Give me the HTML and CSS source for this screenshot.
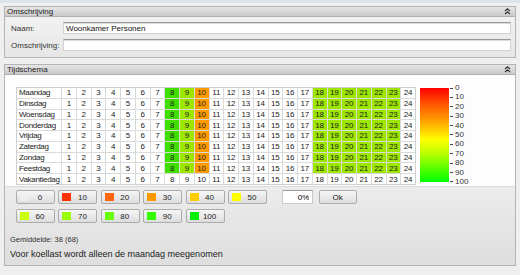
FILE: index.html
```html
<!DOCTYPE html>
<html lang="nl">
  <head>
    <meta charset="UTF-8" />
    <title>Tijdschema</title>
    <link rel="stylesheet" href="styles.css">
  </head>
  <body>
    <div class="page">
      <div class="panel">
        <div class="panel-header">
          <span>Omschrijving</span>
          <svg class="collapse" width="7" height="7" viewBox="0 0 7 7">
            <polyline points="1,3 3.5,0.8 6,3" />
            <polyline points="1,6 3.5,3.8 6,6" />
          </svg>
        </div>
        <div class="panel-body form">
          <div class="form-row">
            <label for="naam">Naam:</label>
            <input id="naam" type="text" value="Woonkamer Personen" />
          </div>
          <div class="form-row">
            <label for="omschrijving">Omschrijving:</label>
            <input id="omschrijving" type="text" value="" />
          </div>
        </div>
      </div>

      <div class="panel">
        <div class="panel-header">
          <span>Tijdschema</span>
          <svg class="collapse" width="7" height="7" viewBox="0 0 7 7">
            <polyline points="1,3 3.5,0.8 6,3" />
            <polyline points="1,6 3.5,3.8 6,6" />
          </svg>
        </div>
        <div class="schedule-area">
          <div id="schedule" class="schedule"></div>
          <div class="legend">
            <div class="legend-bar"></div>
            <div class="legend-scale">
              <span><i></i>0</span>
              <span><i></i>10</span>
              <span><i></i>20</span>
              <span><i></i>30</span>
              <span><i></i>40</span>
              <span><i></i>50</span>
              <span><i></i>60</span>
              <span><i></i>70</span>
              <span><i></i>80</span>
              <span><i></i>90</span>
              <span><i></i>100</span>
            </div>
          </div>
        </div>
        <div class="controls">
          <div class="button-rows">
            <div class="button-row">
              <button class="level"><span class="swatch lvl-0"></span><span class="num">0</span></button>
              <button class="level"><span class="swatch lvl-10"></span><span class="num">10</span></button>
              <button class="level"><span class="swatch lvl-20"></span><span class="num">20</span></button>
              <button class="level"><span class="swatch lvl-30"></span><span class="num">30</span></button>
              <button class="level"><span class="swatch lvl-40"></span><span class="num">40</span></button>
              <button class="level"><span class="swatch lvl-50"></span><span class="num">50</span></button>
              <input class="percent" type="text" value="0%" />
              <button class="ok">Ok</button>
            </div>
            <div class="button-row">
              <button class="level"><span class="swatch lvl-60"></span><span class="num">60</span></button>
              <button class="level"><span class="swatch lvl-70"></span><span class="num">70</span></button>
              <button class="level"><span class="swatch lvl-80"></span><span class="num">80</span></button>
              <button class="level"><span class="swatch lvl-90"></span><span class="num">90</span></button>
              <button class="level"><span class="swatch lvl-100"></span><span class="num">100</span></button>
            </div>
          </div>
          <div class="average">Gemiddelde: 38 (68)</div>
          <div class="note">Voor koellast wordt alleen de maandag meegenomen</div>
        </div>
      </div>
    </div>

    <script>
      const days = [
        "Maandag",
        "Dinsdag",
        "Woensdag",
        "Donderdag",
        "Vrijdag",
        "Zaterdag",
        "Zondag",
        "Feestdag",
        "Vakantiedag",
      ];

      // hour -> cell class, same for every day except Vakantiedag
      const levels = { 8: "c-high", 9: "c-mid", 10: "c-low" };
      for (let h = 18; h <= 23; h++) levels[h] = "c-mid";

      const schedule = document.getElementById("schedule");

      days.forEach((day) => {
        const label = document.createElement("div");
        label.className = "cell day";
        label.textContent = day;
        schedule.appendChild(label);

        for (let h = 1; h <= 24; h++) {
          const cell = document.createElement("div");
          cell.className = "cell";
          if (day !== "Vakantiedag" && levels[h]) {
            cell.classList.add(levels[h]);
          }
          cell.textContent = h;
          schedule.appendChild(cell);
        }
      });
    </script>
  </body>
</html>
```

FILE: styles.css
```css
* {
  margin: 0;
  padding: 0;
  box-sizing: border-box;
}

body {
  font-family: "Liberation Sans", Arial, sans-serif;
  font-size: 8px;
  color: #1e1e1e;
  background: #efefef;
  border-top: 3px solid #dbe4ee;
  width: 520px;
  height: 275px;
  overflow: hidden;
}

.page {
  display: flex;
  flex-direction: column;
  gap: 6px;
  padding: 3px 4px 0 4px;
}

.panel {
  border: 1px solid #b4b4b4;
  background: #eaeaea;
}

.panel-header {
  height: 10px;
  padding: 0 4px 0 2px;
  display: flex;
  align-items: center;
  justify-content: space-between;
  background: linear-gradient(#e6e6e6, #cacaca);
  border-bottom: 1px solid #b0b0b0;
  color: #222;
  line-height: 10px;
}

.collapse polyline {
  fill: none;
  stroke: #333;
  stroke-width: 1.2;
}

/* Omschrijving */

.form {
  display: flex;
  flex-direction: column;
  gap: 5px;
  padding: 5px 4px 6px 6px;
  background: linear-gradient(#f2f2f2, #e6e6e6);
}

.form-row {
  display: flex;
  align-items: center;
  height: 12px;
}

.form-row label {
  width: 52px;
  color: #333;
}

.form-row input {
  flex: 1;
  height: 12px;
  padding: 0 2px;
  font-family: inherit;
  font-size: 8px;
  color: #111;
  background: #fff;
  border: 1px solid #d2d2d2;
  border-top: 1px solid #999;
  box-shadow: inset 0 1px 0 #dcdcdc;
  outline: none;
}

/* Tijdschema */

.schedule-area {
  display: flex;
  align-items: flex-start;
  height: 112px;
  padding: 12px 0 0 11px;
  background: #fdfdfd;
  border-bottom: 1px solid #dadada;
}

.schedule {
  display: grid;
  grid-template-columns: 44px repeat(24, 1fr);
  grid-template-rows: repeat(9, 1fr);
  gap: 1px;
  width: 400px;
  height: 98px;
  border: 1px solid #cfcfcf;
  background: #dadada;
}

.cell {
  display: flex;
  align-items: center;
  justify-content: center;
  background: #fff;
  color: #222;
  font-size: 8px;
}

.cell.day {
  justify-content: flex-start;
  padding-left: 2px;
  letter-spacing: -0.3px;
  white-space: nowrap;
  overflow: hidden;
}

.c-high {
  background: #40df00;
}

.c-mid {
  background: #9de600;
}

.c-low {
  background: #ff9a00;
}

.legend {
  display: flex;
  margin-left: 4px;
}

.legend-bar {
  width: 29px;
  height: 94px;
  margin-top: 1px;
  background: linear-gradient(
    #ff0000 0%,
    #ff5a00 18%,
    #ffa000 35%,
    #ffff00 55%,
    #b8ff00 70%,
    #00ff00 100%
  );
}

.legend-scale {
  display: flex;
  flex-direction: column;
  justify-content: space-between;
  height: 102px;
  margin-top: -3px;
  margin-left: 1px;
}

.legend-scale span {
  display: flex;
  align-items: center;
  height: 8px;
  line-height: 8px;
  color: #333;
}

.legend-scale i {
  width: 3px;
  height: 1px;
  margin-right: 2px;
  background: #444;
}

.controls {
  padding: 3px 5px 6px 5px;
  background: linear-gradient(#ececec, #dedede);
}

.button-rows {
  display: flex;
  flex-direction: column;
  gap: 5px;
  margin-left: 6px;
}

.button-row {
  display: flex;
  gap: 3.4px;
}

button {
  font-family: inherit;
  font-size: 8px;
  color: #222;
  height: 14px;
  background: linear-gradient(#f6f6f6, #dddddd);
  border: 1px solid #acacac;
  border-radius: 2px;
}

.level {
  width: 39px;
  display: flex;
  align-items: center;
  padding: 0 3px;
}

.swatch {
  width: 9px;
  height: 8px;
}

.num {
  flex: 1;
  text-align: center;
}

.lvl-0 { background: #eeeeee; }
.lvl-10 { background: #ff3300; }
.lvl-20 { background: #ff6611; }
.lvl-30 { background: #ff9900; }
.lvl-40 { background: #ffcc00; }
.lvl-50 { background: #ffff00; }
.lvl-60 { background: #ccff00; }
.lvl-70 { background: #99ff00; }
.lvl-80 { background: #66ff00; }
.lvl-90 { background: #33ff00; }
.lvl-100 { background: #00ee00; }

.percent {
  width: 31px;
  height: 14px;
  margin-left: 12px;
  padding: 0 3px;
  text-align: right;
  font-family: inherit;
  font-size: 8px;
  background: #fff;
  border: 1px solid #c8c8c8;
  border-top: 1px solid #9a9a9a;
  outline: none;
}

.ok {
  width: 38px;
  margin-left: 2px;
}

.average {
  margin-top: 12px;
  font-size: 7.5px;
  color: #333;
}

.note {
  margin-top: 5px;
  font-size: 9px;
  color: #222;
}
```
